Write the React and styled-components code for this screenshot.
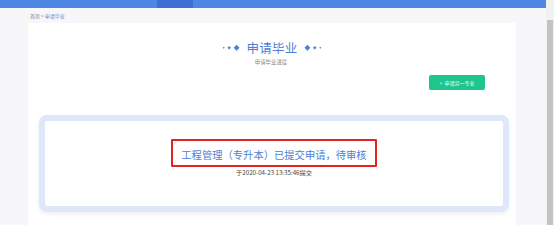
import React from 'react';
import styled, { createGlobalStyle } from 'styled-components';

const GlobalStyle = createGlobalStyle`
    html, body {
        margin: 0;
        padding: 0;
        background: #f4f5f8;
    }
    body {
        font-family: "Noto Sans CJK SC", "Noto Sans", sans-serif;
    }
`;

const Page = styled.div`
    display: flex;
    width: 554px;
    height: 225px;
    overflow: hidden;
`;

const Main = styled.div`
    flex: 1;
    display: flex;
    flex-direction: column;
    background: #f4f5f8;
`;

const TopBar = styled.div`
    height: 8px;
    background: #4d87e3;
    display: flex;
    flex-shrink: 0;
`;

const NavActive = styled.div`
    margin-left: 157px;
    width: 36px;
    background: #3d6fd4;
`;

const Body = styled.div`
    flex: 1;
    padding-left: 28px;
    padding-right: 30px;
    display: flex;
    flex-direction: column;
    background: #f7f7fa;
`;

const Breadcrumb = styled.div`
    height: 15px;
    display: flex;
    align-items: center;
    padding-left: 2px;
    font-size: 5px;
    color: #777;
    gap: 1px;
    span.current {
        color: #4d82d8;
    }
`;

const Panel = styled.div`
    flex: 1;
    background: #ffffff;
    display: flex;
    flex-direction: column;
`;

const TitleRow = styled.div`
    display: flex;
    align-items: center;
    justify-content: center;
    gap: 3px;
    margin-top: 17px;
    height: 14px;
`;

const Title = styled.div`
    font-size: 12.5px;
    color: #4b80d8;
    letter-spacing: 0.2px;
    margin: 0 2px;
`;

const SubTitle = styled.div`
    text-align: center;
    font-size: 5.4px;
    color: #888;
    margin-top: 4px;
    margin-left: -2px;
`;

const ActionRow = styled.div`
    display: flex;
    justify-content: flex-end;
    padding-right: 31px;
    margin-top: 9px;
`;

const GreenButton = styled.button`
    width: 56px;
    height: 15px;
    border: none;
    border-radius: 2px;
    background: #1ec68c;
    color: #ffffff;
    font-family: inherit;
    font-size: 5px;
    padding: 0;
    display: flex;
    align-items: center;
    justify-content: center;
    gap: 2px;
`;

const Card = styled.div`
    margin: 25px 7px 0 11px;
    height: 67px;
    border: 6px solid #dfe8f8;
    border-radius: 8px;
    background: #ffffff;
    box-shadow: 0 2px 4px rgba(120, 140, 180, 0.15);
    display: flex;
    flex-direction: column;
    align-items: center;
    padding-top: 18px;
    box-sizing: content-box;
`;

const StatusBox = styled.div`
    width: 202px;
    height: 22px;
    border: 2px solid #e02424;
    border-radius: 1px;
    display: flex;
    align-items: center;
    justify-content: center;
    font-size: 10.3px;
    color: #4b80d8;
    padding-top: 2px;
    box-sizing: content-box;
`;

const DateLine = styled.div`
    font-size: 6.2px;
    color: #444;
    margin-top: 1px;
`;

const Scrollbar = styled.div`
    width: 8px;
    background: #f1f1f1;
    display: flex;
    flex-direction: column;
    padding-top: 20px;
`;

const Thumb = styled.div`
    margin: 0 1px;
    flex: 1;
    background: #c3c3c3;
`;

const Ornament = ({ flip }) => (
    <svg width="20" height="7" viewBox="0 0 20 7" style={{ transform: flip ? 'scaleX(-1)' : 'none' }}>
        <rect x="1" y="3" width="1.4" height="1.4" fill="#4b80d8" transform="rotate(45 1.7 3.7)" />
        <rect x="6" y="2.5" width="2.4" height="2.4" fill="#4b80d8" transform="rotate(45 7.2 3.7)" />
        <rect x="12.5" y="1.6" width="4.2" height="4.2" fill="#4b80d8" transform="rotate(45 14.6 3.7)" />
    </svg>
);

const App = () => (
    <Page>
        <GlobalStyle />
        <Main>
            <TopBar>
                <NavActive />
            </TopBar>
            <Body>
                <Breadcrumb>
                    <span>首页</span>
                    <span>&gt;</span>
                    <span className="current">申请毕业</span>
                </Breadcrumb>
                <Panel>
                    <TitleRow>
                        <Ornament />
                        <Title>申请毕业</Title>
                        <Ornament flip />
                    </TitleRow>
                    <SubTitle>申请毕业进度</SubTitle>
                    <ActionRow>
                        <GreenButton>
                            <span>+</span>
                            <span>申请另一专业</span>
                        </GreenButton>
                    </ActionRow>
                    <Card>
                        <StatusBox>工程管理（专升本）已提交申请，待审核</StatusBox>
                        <DateLine>于2020-04-23 13:35:46提交</DateLine>
                    </Card>
                </Panel>
            </Body>
        </Main>
        <Scrollbar>
            <Thumb />
        </Scrollbar>
    </Page>
);

export default App;
